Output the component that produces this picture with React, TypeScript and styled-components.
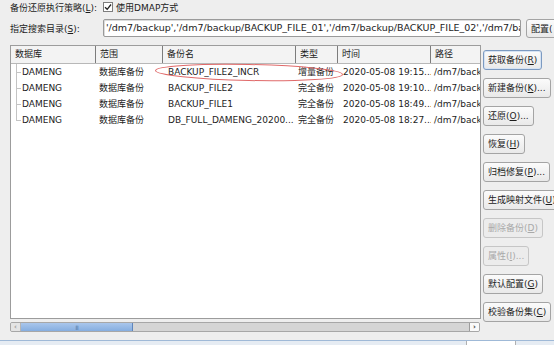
import styled, { createGlobalStyle, css } from "styled-components"

const GlobalStyle = createGlobalStyle`
    html, body {
        margin: 0;
        padding: 0;
        background: #eeeeee;
    }

    body {
        width: 554px;
        height: 345px;
        overflow: hidden;
        font-family: "DejaVu Sans", "Noto Sans CJK SC", sans-serif;
        font-size: 9px;
        color: #1c1c1c;
    }
`

const Page = styled.div`
    width: 554px;
    height: 345px;
    display: flex;
    flex-direction: column;
    overflow: hidden;
`

const TopRow = styled.div`
    height: 14px;
    padding-left: 10px;
    display: flex;
    align-items: center;
    gap: 6px;
    white-space: nowrap;
`

const CheckBox = styled.span`
    width: 8px;
    height: 8px;
    border: 1px solid #7d7d7d;
    background: #fff;
    display: inline-flex;
    align-items: center;
    justify-content: center;
    margin-right: -1px;
`

const PathRow = styled.div`
    margin-top: 5px;
    height: 18px;
    padding-left: 10px;
    display: flex;
    align-items: center;
    white-space: nowrap;
`

const PathLabel = styled.span`
    width: 93px;
    flex-shrink: 0;
`

const PathInput = styled.div`
    width: 418px;
    height: 18px;
    flex-shrink: 0;
    box-sizing: border-box;
    border: 1px solid #9a9a9a;
    border-radius: 2px;
    background: #fff;
    padding: 0 2px;
    line-height: 16px;
    font-size: 9.5px;
    overflow: hidden;
    box-shadow: inset 1px 1px 0 #dcdcdc;
`

const Main = styled.div`
    margin-top: 8px;
    padding-left: 10px;
    display: flex;
    gap: 2px;
`

const TableArea = styled.div`
    width: 471px;
    flex-shrink: 0;
    display: flex;
    flex-direction: column;
`

const TableFrame = styled.div`
    height: 274px;
    box-sizing: border-box;
    border: 1px solid #9c9c9c;
    background: #fff;
    position: relative;
    overflow: hidden;
`

const cols = "85px 67px 133px 42px 93px 60px"

const HeaderRow = styled.div`
    display: grid;
    grid-template-columns: ${cols};
    height: 17px;
    background: #f3f3f3;
    border-bottom: 1px solid #b8b8b8;
`

const HeaderCell = styled.div`
    border-right: 1px solid #7c7c7c;
    padding-left: 4px;
    line-height: 17px;
    white-space: nowrap;
    overflow: hidden;
`

const DataRow = styled.div`
    display: grid;
    grid-template-columns: ${cols};
    height: 16px;
    line-height: 17px;
`

const Cell = styled.div<{ $pad?: number }>`
    padding-left: ${(p) => p.$pad ?? 4}px;
    white-space: nowrap;
    overflow: hidden;
`

const TreeCell = styled.div<{ $last?: boolean }>`
    position: relative;
    padding-left: 11px;
    white-space: nowrap;
    overflow: hidden;

    &::before {
        content: "";
        position: absolute;
        left: 5px;
        top: 0;
        height: ${(p) => (p.$last ? "9px" : "16px")};
        border-left: 1px solid #c4c4c4;
    }

    &::after {
        content: "";
        position: absolute;
        left: 5px;
        top: 8px;
        width: 5px;
        border-top: 1px solid #c4c4c4;
    }
`

const Annotation = styled.svg`
    position: absolute;
    left: 141px;
    top: 16px;
    pointer-events: none;
`

const ScrollBar = styled.div`
    margin-top: 3px;
    width: 470px;
    height: 10px;
    box-sizing: border-box;
    border: 1px solid #a7a7a7;
    border-radius: 2px;
    background: #d5d5d5;
    display: flex;
    overflow: hidden;
`

const ScrollArrow = styled.div<{ $right?: boolean }>`
    width: 9px;
    flex-shrink: 0;
    background: ${(p) => (p.$right ? "#fafafa" : "#e4e4e4")};
    display: flex;
    align-items: center;
    justify-content: center;
    font-size: 7px;
    font-weight: bold;
    color: ${(p) => (p.$right ? "#333" : "#999")};
    margin-left: ${(p) => (p.$right ? "auto" : "0")};
    border-left: ${(p) => (p.$right ? "1px solid #9c9c9c" : "none")};
    border-right: ${(p) => (p.$right ? "none" : "1px solid #b5b5b5")};
`

const ScrollThumb = styled.div`
    width: 112px;
    box-sizing: border-box;
    background: linear-gradient(#a9c6ec, #86aee0);
    border-right: 1px solid #5f86bd;
    display: flex;
    align-items: center;
    justify-content: center;
    font-size: 6px;
    color: #5d80b4;
    letter-spacing: -1px;
`

const ButtonColumn = styled.div`
    padding-top: 5px;
    display: flex;
    flex-direction: column;
    align-items: flex-start;
    gap: 8px;
`

const Button = styled.div<{ $primary?: boolean; $disabled?: boolean }>`
    height: 20px;
    box-sizing: border-box;
    padding: 0 4px;
    border: 1px solid #a4a4a4;
    border-radius: 3px;
    background: linear-gradient(#fbfbfb, #e9e9e9);
    line-height: 18px;
    white-space: nowrap;
    flex-shrink: 0;

    ${(p) =>
        p.$primary &&
        css`
            border-color: #7c9ac1;
            box-shadow: inset 0 0 0 1px #d6e3f3;
        `}

    ${(p) =>
        p.$disabled &&
        css`
            color: #a9a9a9;
            border-color: #c6c6c6;
            background: #ececec;
        `}
`

const ConfigButton = styled(Button)`
    margin-left: 5px;
    height: 19px;
`

const Footer = styled.div`
    margin-top: auto;
    height: 4px;
    border-top: 1px solid #9fb9d7;
    background: #e6ecf3;
    display: flex;
`

const FooterTab = styled.div`
    margin-left: 466px;
    width: 48px;
    background: #fff;
    border-left: 1px solid #b0b0b0;
    border-right: 1px solid #b0b0b0;
`

const rows = [
    ["DAMENG", "数据库备份", "BACKUP_FILE2_INCR", "增量备份", "2020-05-08 19:15...", "/dm7/backup"],
    ["DAMENG", "数据库备份", "BACKUP_FILE2", "完全备份", "2020-05-08 19:10...", "/dm7/backup"],
    ["DAMENG", "数据库备份", "BACKUP_FILE1", "完全备份", "2020-05-08 18:49...", "/dm7/backup"],
    ["DAMENG", "数据库备份", "DB_FULL_DAMENG_20200...", "完全备份", "2020-05-08 18:27...", "/dm7/backup"],
]

const actions: { label: string; key: string; tail?: string; primary?: boolean; disabled?: boolean }[] = [
    { label: "获取备份", key: "R", tail: ")", primary: true },
    { label: "新建备份", key: "K", tail: ")..." },
    { label: "还原", key: "O", tail: ")..." },
    { label: "恢复", key: "H", tail: ")" },
    { label: "归档修复", key: "P", tail: ")..." },
    { label: "生成映射文件", key: "U", tail: ")" },
    { label: "删除备份", key: "D", tail: ")", disabled: true },
    { label: "属性", key: "I", tail: ")...", disabled: true },
    { label: "默认配置", key: "G", tail: ")" },
    { label: "校验备份集", key: "C", tail: ")" },
]

export default function App() {
    return (
        <Page>
            <GlobalStyle />
            <TopRow>
                <span>
                    备份还原执行策略(<u>L</u>):
                </span>
                <span style={{ display: "flex", alignItems: "center", gap: 4 }}>
                    <CheckBox>
                        <svg width="8" height="8" viewBox="0 0 8 8">
                            <path d="M1 4.2 L3.2 6.3 L7 1.5" fill="none" stroke="#222" strokeWidth="1.3" />
                        </svg>
                    </CheckBox>
                    使用DMAP方式
                </span>
            </TopRow>

            <PathRow>
                <PathLabel>
                    指定搜索目录(<u>S</u>):
                </PathLabel>
                <PathInput>
                    '/dm7/backup','/dm7/backup/BACKUP_FILE_01','/dm7/backup/BACKUP_FILE_02','/dm7/backup'
                </PathInput>
                <ConfigButton>配置(</ConfigButton>
            </PathRow>

            <Main>
                <TableArea>
                    <TableFrame>
                        <HeaderRow>
                            <HeaderCell>数据库</HeaderCell>
                            <HeaderCell>范围</HeaderCell>
                            <HeaderCell>备份名</HeaderCell>
                            <HeaderCell>类型</HeaderCell>
                            <HeaderCell>时间</HeaderCell>
                            <HeaderCell>路径</HeaderCell>
                        </HeaderRow>
                        {rows.map((r, i) => (
                            <DataRow key={i}>
                                <TreeCell $last={i === rows.length - 1}>{r[0]}</TreeCell>
                                <Cell $pad={3}>{r[1]}</Cell>
                                <Cell $pad={5}>{r[2]}</Cell>
                                <Cell $pad={2}>{r[3]}</Cell>
                                <Cell $pad={5}>{r[4]}</Cell>
                                <Cell $pad={3}>{r[5]}</Cell>
                            </DataRow>
                        ))}
                        <Annotation width="200" height="22" viewBox="0 0 200 22">
                            <ellipse
                                cx="97"
                                cy="10.5"
                                rx="93.5"
                                ry="8"
                                transform="rotate(1.2 97 10.5)"
                                fill="none"
                                stroke="#e06a6a"
                                strokeWidth="1"
                            />
                        </Annotation>
                    </TableFrame>
                    <ScrollBar>
                        <ScrollArrow>‹</ScrollArrow>
                        <ScrollThumb>III</ScrollThumb>
                        <ScrollArrow $right>›</ScrollArrow>
                    </ScrollBar>
                </TableArea>

                <ButtonColumn>
                    {actions.map((a) => (
                        <Button key={a.key} $primary={a.primary} $disabled={a.disabled}>
                            {a.label}(<u>{a.key}</u>
                            {a.tail}
                        </Button>
                    ))}
                </ButtonColumn>
            </Main>

            <Footer>
                <FooterTab />
            </Footer>
        </Page>
    )
}
